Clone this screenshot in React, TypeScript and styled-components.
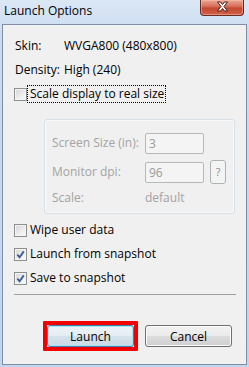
import React from 'react';
import styled, {createGlobalStyle} from 'styled-components';

const GlobalStyle = createGlobalStyle`
    html, body {
        margin: 0;
        padding: 0;
    }
    body {
        font-family: "Segoe UI", "Open Sans", "Noto Sans", sans-serif;
        font-size: 12px;
        color: #000;
    }
`;

const Window = styled.div`
    width: 249px;
    height: 367px;
    box-sizing: border-box;
    padding: 0 2px 2px 2px;
    display: flex;
    flex-direction: column;
    overflow: hidden;
    background: linear-gradient(to bottom, #dbe7f5 0px, #c9dbf0 40px, #c1d5ed 100%);
`;

const TitleBar = styled.div`
    height: 24px;
    display: flex;
    align-items: flex-start;
    justify-content: space-between;
`;

const Title = styled.span`
    padding: 3px 0 0 2px;
    line-height: 16px;
    font-size: 12px;
`;

const CloseButton = styled.div`
    width: 44px;
    height: 16px;
    margin-right: 3px;
    box-sizing: border-box;
    border: 1px solid #6b2a22;
    border-top: none;
    border-radius: 0 0 4px 4px;
    background: linear-gradient(to bottom, #e9a795 0%, #d8735e 40%, #c5472f 55%, #d0624a 100%);
    box-shadow: inset 0 0 0 1px rgba(255, 200, 185, 0.45);
    display: flex;
    align-items: center;
    justify-content: center;
`;

const Client = styled.div`
    flex: 1;
    border: 1px solid #7f8ea3;
    background: #f0f0f0;
    padding: 9px 10px 0 11px;
    display: flex;
    flex-direction: column;
`;

const InfoRow = styled.div`
    height: 24px;
    display: flex;
    align-items: center;
    padding-left: 1px;
    line-height: 16px;
`;

const InfoLabel = styled.span`
    width: 49px;
`;

const CheckRow = styled.div<{ $top?: number }>`
    height: 24px;
    display: flex;
    align-items: center;
    margin-top: ${p => p.$top ?? 0}px;
`;

const Box = styled.span`
    width: 13px;
    height: 13px;
    box-sizing: border-box;
    border: 1px solid #8e8f8f;
    background: linear-gradient(135deg, #d6d6d6 0%, #f2f2f2 70%, #fbfbfb 100%);
    box-shadow: inset 0 0 0 1px #f4f4f4;
    display: flex;
    align-items: center;
    justify-content: center;
    margin-right: 1px;
`;

const CheckLabel = styled.span<{ $focused?: boolean }>`
    padding: 0 1px 0 2px;
    line-height: 16px;
    outline: ${p => (p.$focused ? '1px dotted #000' : 'none')};
    outline-offset: 0;
`;

const Group = styled.div`
    margin: 13px 0 0 30px;
    width: 191px;
    box-sizing: border-box;
    border: 1px solid #d5dfe5;
    border-radius: 3px;
    box-shadow: inset 0 0 0 1px #fafafa;
    padding: 12px 0 7px 7px;
    display: flex;
    flex-direction: column;
    color: #a3a3a3;
`;

const GroupRow = styled.div<{ $h: number; $top?: number }>`
    height: ${p => p.$h}px;
    margin-top: ${p => p.$top ?? 0}px;
    display: flex;
    align-items: center;
    line-height: 16px;
`;

const GroupLabel = styled.span`
    width: 93px;
`;

const TextBox = styled.div`
    width: 59px;
    height: 21px;
    box-sizing: border-box;
    border: 1px solid #b5b9bc;
    border-radius: 2px;
    background: #f4f4f4;
    padding: 1px 3px;
    line-height: 17px;
    color: #9a9a9a;
`;

const HelpButton = styled.div`
    width: 16px;
    height: 24px;
    margin-left: 6px;
    box-sizing: border-box;
    border: 1px solid #adb2b5;
    border-radius: 3px;
    background: #f4f4f4;
    display: flex;
    align-items: center;
    justify-content: center;
    color: #8a8a8a;
    font-size: 11px;
`;

const Separator = styled.div`
    height: 1px;
    margin-top: 4px;
    background: #a0a0a0;
`;

const ButtonRow = styled.div`
    display: flex;
    align-items: center;
    gap: 11px;
    margin-top: 30px;
    padding-left: 33px;
`;

const Highlight = styled.span`
    display: flex;
    margin: -4px;
    border: 4px solid #f20000;
    border-radius: 1px;
`;

const Button = styled.button<{ $default?: boolean }>`
    width: 87px;
    height: 22px;
    box-sizing: border-box;
    padding: 0;
    font-family: inherit;
    font-size: 12px;
    color: #000;
    border-radius: 3px;
    border: 1px solid ${p => (p.$default ? '#3c7fb1' : '#707070')};
    background: ${p => p.$default
        ? 'linear-gradient(to bottom, #eef4f8 0%, #e4edf3 50%, #d6e3ec 50%, #cbd9e3 100%)'
        : 'linear-gradient(to bottom, #f2f2f2 0%, #ebebeb 50%, #dddddd 50%, #cfcfcf 100%)'};
    box-shadow: ${p => p.$default ? 'inset 0 0 0 1px #a6e6fb' : 'inset 0 0 0 1px #fbfbfb'};
`;

function Check({checked}: { checked?: boolean }) {
    return (
        <Box>
            {checked &&
                <svg width="9" height="9" viewBox="0 0 9 9">
                    <path d="M1.3 4.6 L3.6 7.2 L7.8 1.4" fill="none" stroke="#3b5a93" strokeWidth="1.8"/>
                </svg>}
        </Box>
    );
}

function App() {
    return (
        <>
            <GlobalStyle/>
            <Window>
                <TitleBar>
                    <Title>Launch Options</Title>
                    <CloseButton>
                        <svg width="13" height="11" viewBox="0 0 13 11" style={{marginTop: -3}}>
                            <path d="M1.5 1 H4.5 L6.5 3.5 L8.5 1 H11.5 L8 5.5 L11.5 10 H8.5 L6.5 7.5 L4.5 10 H1.5 L5 5.5 Z"
                                  fill="#fff" stroke="#4a1d18" strokeWidth="1" strokeLinejoin="round"/>
                        </svg>
                    </CloseButton>
                </TitleBar>
                <Client>
                    <InfoRow><InfoLabel>Skin:</InfoLabel>WVGA800 (480x800)</InfoRow>
                    <InfoRow><InfoLabel>Density:</InfoLabel>High (240)</InfoRow>
                    <CheckRow><Check/><CheckLabel $focused>Scale display to real size</CheckLabel></CheckRow>
                    <Group>
                        <GroupRow $h={22}>
                            <GroupLabel>Screen Size (in):</GroupLabel>
                            <TextBox>3</TextBox>
                        </GroupRow>
                        <GroupRow $h={24} $top={6}>
                            <GroupLabel>Monitor dpi:</GroupLabel>
                            <TextBox>96</TextBox>
                            <HelpButton>?</HelpButton>
                        </GroupRow>
                        <GroupRow $h={16} $top={6}>
                            <GroupLabel>Scale:</GroupLabel>
                            default
                        </GroupRow>
                    </Group>
                    <CheckRow $top={4}><Check/><CheckLabel>Wipe user data</CheckLabel></CheckRow>
                    <CheckRow><Check checked/><CheckLabel>Launch from snapshot</CheckLabel></CheckRow>
                    <CheckRow><Check checked/><CheckLabel>Save to snapshot</CheckLabel></CheckRow>
                    <Separator/>
                    <ButtonRow>
                        <Highlight><Button $default>Launch</Button></Highlight>
                        <Button>Cancel</Button>
                    </ButtonRow>
                </Client>
            </Window>
        </>
    );
}

export default App;
